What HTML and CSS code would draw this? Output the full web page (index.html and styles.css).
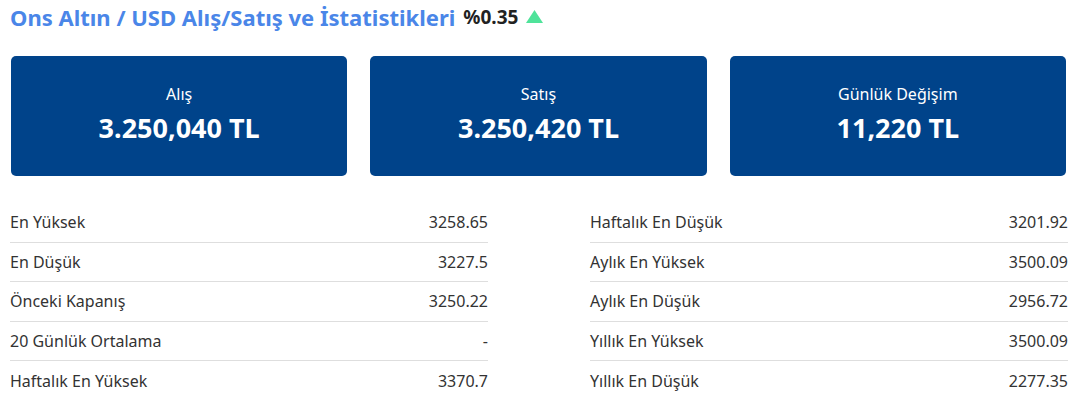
FILE: index.html
```html
<!DOCTYPE html>
<html lang="tr">
<head>
<meta charset="utf-8">
<link rel="stylesheet" href="styles.css">
</head>
<body>
<div class="page">
  <h1 class="title">Ons Altın / USD Alış/Satış ve İstatistikleri <span class="pct">%0.35</span> <svg class="up" width="17" height="13" viewBox="0 0 17 13"><polygon points="8.5,0 17,13 0,13" fill="#4fe39a"/></svg></h1>
  <div class="cards">
    <div class="card"><div class="card-label">Alış</div><div class="card-value">3.250,040 TL</div></div>
    <div class="card"><div class="card-label">Satış</div><div class="card-value">3.250,420 TL</div></div>
    <div class="card"><div class="card-label">Günlük Değişim</div><div class="card-value">11,220 TL</div></div>
  </div>
  <div class="stats">
    <ul class="col">
      <li class="row"><span>En Yüksek</span><span>3258.65</span></li>
      <li class="row"><span>En Düşük</span><span>3227.5</span></li>
      <li class="row"><span>Önceki Kapanış</span><span>3250.22</span></li>
      <li class="row"><span>20 Günlük Ortalama</span><span>-</span></li>
      <li class="row"><span>Haftalık En Yüksek</span><span>3370.7</span></li>
    </ul>
    <ul class="col">
      <li class="row"><span>Haftalık En Düşük</span><span>3201.92</span></li>
      <li class="row"><span>Aylık En Yüksek</span><span>3500.09</span></li>
      <li class="row"><span>Aylık En Düşük</span><span>2956.72</span></li>
      <li class="row"><span>Yıllık En Yüksek</span><span>3500.09</span></li>
      <li class="row"><span>Yıllık En Düşük</span><span>2277.35</span></li>
    </ul>
  </div>
</div>
</body>
</html>
```
FILE: styles.css
```css
* { box-sizing: border-box; }
body {
  margin: 0;
  background: #fff;
  font-family: "Noto Sans", "DejaVu Sans", sans-serif;
  color: #333;
}
.page {
  padding: 2px 12px 0 10px;
}
.title {
  margin: 0;
  height: 30px;
  display: flex;
  align-items: center;
  gap: 6px;
  font-size: 22px;
  font-weight: 700;
  color: #4a86e8;
  white-space: nowrap;
}
.pct {
  font-size: 19px;
  color: #222;
  margin-left: 2px;
}
.up { margin-top: -1px; margin-left: 2px; }
.cards {
  margin-top: 24px;
  display: grid;
  grid-template-columns: repeat(3, 1fr);
  gap: 23px;
  padding-left: 1px;
  padding-right: 2px;
}
.card {
  height: 120px;
  background: #00438a;
  border-radius: 5px;
  color: #fff;
  display: flex;
  flex-direction: column;
  align-items: center;
  justify-content: center;
  gap: 5px;
  padding-bottom: 3px;
}
.card-label {
  font-size: 16px;
  line-height: 22px;
}
.card-value {
  font-size: 27px;
  font-weight: 700;
  line-height: 36px;
}
.stats {
  margin-top: 27px;
  display: grid;
  grid-template-columns: 478px 478px;
  column-gap: 102px;
}
.col {
  list-style: none;
  margin: 0;
  padding: 0;
}
.row {
  height: 39.5px;
  display: flex;
  align-items: center;
  justify-content: space-between;
  font-size: 16px;
  color: #333;
  border-bottom: 1px solid #dedede;
}
.row:last-child { border-bottom: none; }
```
